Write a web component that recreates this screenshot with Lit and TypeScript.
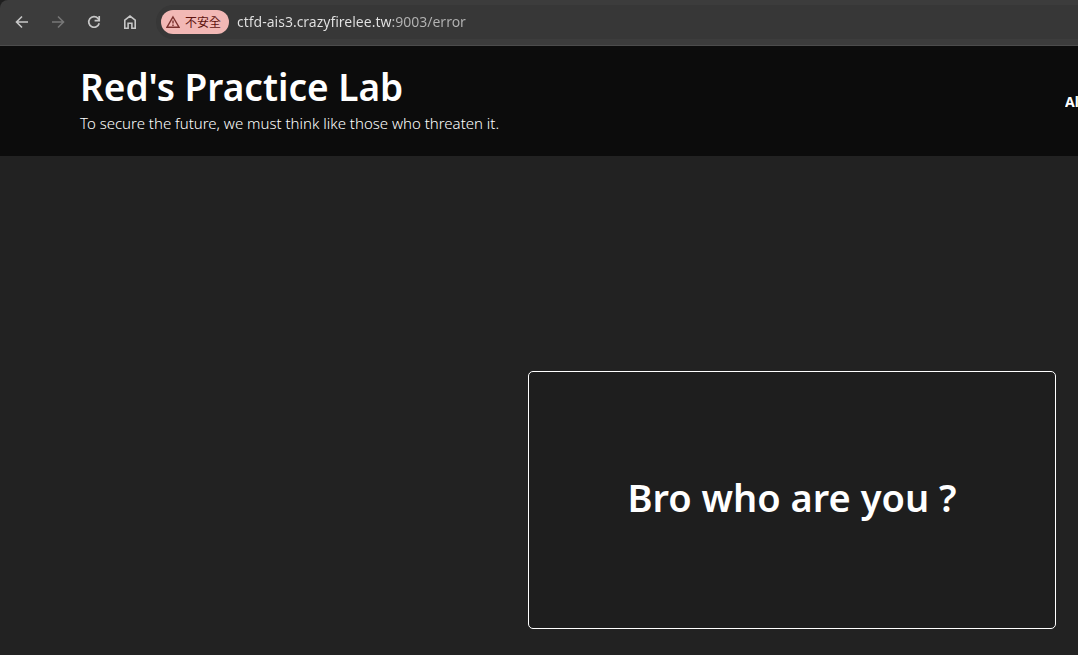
import { LitElement, html, css } from "lit";
import { customElement } from "lit/decorators.js";

@customElement("browser-toolbar")
class BrowserToolbar extends LitElement {
  static styles = css`
    :host {
      display: block;
      background: #1f1f1f;
    }
    .bar {
      display: flex;
      align-items: center;
      gap: 12px;
      height: 44px;
      padding: 0 0 1px 10px;
      background: #3c3c3c;
      border-bottom: 1px solid #4c4c4c;
      border-top-left-radius: 8px;
    }
    .icon {
      display: flex;
      width: 24px;
      height: 24px;
      padding: 4px;
      box-sizing: border-box;
      border: 0;
      background: none;
      color: #c7c7c7;
    }
    .icon:disabled {
      color: #777777;
    }
    .icon svg {
      width: 16px;
      height: 16px;
    }
    .address {
      display: flex;
      flex: 1;
      align-items: center;
      gap: 8px;
      height: 34px;
      margin-left: 2px;
      padding-left: 5px;
      background: #373737;
      border-radius: 17px 0 0 17px;
    }
    .chip {
      display: flex;
      align-items: center;
      gap: 5px;
      flex: none;
      width: 68px;
      height: 24px;
      box-sizing: border-box;
      padding: 0 0 0 5px;
      border: 0;
      border-radius: 12px;
      background: #f2b8b5;
      color: #601410;
      font: 12px/24px "Noto Sans CJK TC", sans-serif;
      white-space: nowrap;
    }
    .chip svg {
      width: 14px;
      height: 14px;
      flex: none;
    }
    .url {
      flex: 1;
      min-width: 0;
      height: 24px;
      padding: 0;
      border: 0;
      outline: 0;
      font: 14px/24px "Noto Sans", sans-serif;
      background: linear-gradient(to right, #e3e3e3 154px, #b4b4b4 154px);
      -webkit-background-clip: text;
      background-clip: text;
      color: transparent;
    }
  `;

  render() {
    return html`
      <div class="bar">
        <button class="icon" aria-label="Back">
          <svg viewBox="0 0 16 16" fill="none" stroke="currentColor" stroke-width="1.6">
            <path d="M14 8H3M8 2.5L2.5 8L8 13.5" />
          </svg>
        </button>
        <button class="icon" aria-label="Forward" disabled>
          <svg viewBox="0 0 16 16" fill="none" stroke="currentColor" stroke-width="1.6">
            <path d="M2 8H13M8 2.5L13.5 8L8 13.5" />
          </svg>
        </button>
        <button class="icon" aria-label="Reload">
          <svg viewBox="0 0 16 16" fill="none" stroke="currentColor" stroke-width="1.7">
            <path d="M13.2 9.2A5.3 5.3 0 1 1 12 4.4L13.2 6" />
            <path d="M13.2 2V6.6H8.6" />
          </svg>
        </button>
        <button class="icon" aria-label="Home">
          <svg viewBox="0 0 16 16" fill="none" stroke="currentColor" stroke-width="1.6">
            <path d="M2.8 6.1L8 2L13.2 6.1V14.2H9.9V9.2H6.1V14.2H2.8Z" />
          </svg>
        </button>
        <div class="address">
          <button class="chip">
            <svg viewBox="0 0 14 14" fill="none" stroke="#7a302d" stroke-width="1.4">
              <path d="M7 2L13 12.2H1Z" />
              <path d="M7 5.4V8.6M7 9.6V10.9" />
            </svg>
            不安全
          </button>
          <input class="url" type="text" aria-label="Address" spellcheck="false"
            value="ctfd-ais3.crazyfirelee.tw:9003/error" />
        </div>
      </div>
    `;
  }
}

@customElement("app-root")
class AppRoot extends LitElement {
  static styles = css`
    :host {
      display: flex;
      flex-direction: column;
      min-height: 100vh;
      overflow: hidden;
      background: #222222;
      color: #ffffff;
      font-family: "Noto Sans", sans-serif;
    }
    header {
      display: flex;
      align-items: center;
      justify-content: space-between;
      padding: 19px 0 19px 80px;
      background: #0c0c0c;
    }
    h1,
    h2 {
      margin: 0;
      font-weight: 600;
      line-height: 44px;
    }
    h1 {
      font-size: 37px;
    }
    h2 {
      font-size: 38px;
    }
    p {
      margin: 0;
      font-size: 15px;
      font-weight: 300;
      line-height: 28px;
    }
    nav {
      width: 13px;
      padding-top: 2px;
      overflow: hidden;
    }
    nav a {
      color: inherit;
      font-size: 14px;
      font-weight: 700;
      line-height: 24px;
      text-decoration: none;
    }
    main {
      display: flex;
      flex: 1;
      align-items: flex-end;
      justify-content: flex-end;
      padding: 0 22px 26px;
    }
    .card {
      width: 100%;
      max-width: 528px;
      padding: 103px 0 109px;
      box-sizing: border-box;
      border: 1px solid #ffffff;
      border-radius: 5px;
      background: #1e1e1e;
      text-align: center;
    }
  `;

  render() {
    return html`
      <browser-toolbar></browser-toolbar>
      <header>
        <div>
          <h1>Red's Practice Lab</h1>
          <p>To secure the future, we must think like those who threaten it.</p>
        </div>
        <nav><a href="#">Al</a></nav>
      </header>
      <main>
        <section class="card"><h2>Bro who are you ?</h2></section>
      </main>
    `;
  }
}
